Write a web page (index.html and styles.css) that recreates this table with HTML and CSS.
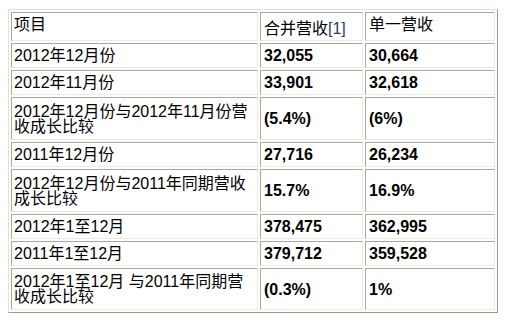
FILE: index.html
```html
<!DOCTYPE html>
<html lang="zh">

<head>
  <meta charset="UTF-8" />
  <title>营收比较</title>
  <link rel="stylesheet" href="styles.css">
</head>

<body>
  <table class="revenue">
    <tr class="head">
      <td class="label">项目</td>
      <td class="num low">合并营收<span class="note">[1]</span></td>
      <td class="num">单一营收</td>
    </tr>
    <tr>
      <td class="label">2012年12月份</td>
      <td class="num"><b>32,055</b></td>
      <td class="num"><b>30,664</b></td>
    </tr>
    <tr>
      <td class="label">2012年11月份</td>
      <td class="num"><b>33,901</b></td>
      <td class="num"><b>32,618</b></td>
    </tr>
    <tr class="two">
      <td class="label">2012年12月份与2012年11月份营收成长比较</td>
      <td class="num"><b>(5.4%)</b></td>
      <td class="num"><b>(6%)</b></td>
    </tr>
    <tr>
      <td class="label">2011年12月份</td>
      <td class="num"><b>27,716</b></td>
      <td class="num"><b>26,234</b></td>
    </tr>
    <tr class="two">
      <td class="label">2012年12月份与2011年同期营收成长比较</td>
      <td class="num"><b>15.7%</b></td>
      <td class="num"><b>16.9%</b></td>
    </tr>
    <tr>
      <td class="label">2012年1至12月</td>
      <td class="num"><b>378,475</b></td>
      <td class="num"><b>362,995</b></td>
    </tr>
    <tr>
      <td class="label">2011年1至12月</td>
      <td class="num"><b>379,712</b></td>
      <td class="num"><b>359,528</b></td>
    </tr>
    <tr class="two last">
      <td class="label">2012年1至12月 与2011年同期营收成长比较</td>
      <td class="num"><b>(0.3%)</b></td>
      <td class="num"><b>1%</b></td>
    </tr>
  </table>
</body>

</html>
```

FILE: styles.css
```css
html,
body {
  background: #fff;
  margin: 0;
  padding: 0;
}

body {
  padding: 9px 8px;
  font-family: "Liberation Sans", Arial, "Noto Sans CJK SC", sans-serif;
  font-size: 16px;
  line-height: 15px;
  color: #000;
}

.revenue {
  border-collapse: separate;
  border-spacing: 2px;
  border: 1px solid;
  border-color: #e4e2d6 #9d9a8c #9d9a8c #e4e2d6;
}

.revenue td {
  box-sizing: border-box;
  border: 1px solid;
  border-color: #aca899 #ecebe2 #ecebe2 #aca899;
  padding: 4px 4px 4px 2px;
  vertical-align: middle;
  height: 25px;
}

.revenue td.label {
  width: 247px;
}

.revenue td:nth-child(2) {
  width: 103px;
  padding-left: 3px;
}

.revenue td:nth-child(3) {
  width: 130px;
  padding-left: 3px;
}

.revenue .head td {
  height: 29px;
  vertical-align: top;
}

.revenue .head td.low {
  vertical-align: bottom;
}

.note {
  color: #2c3a66;
}

.revenue .two td {
  height: 43px;
}

.revenue .last td {
  height: 42px;
}
```
